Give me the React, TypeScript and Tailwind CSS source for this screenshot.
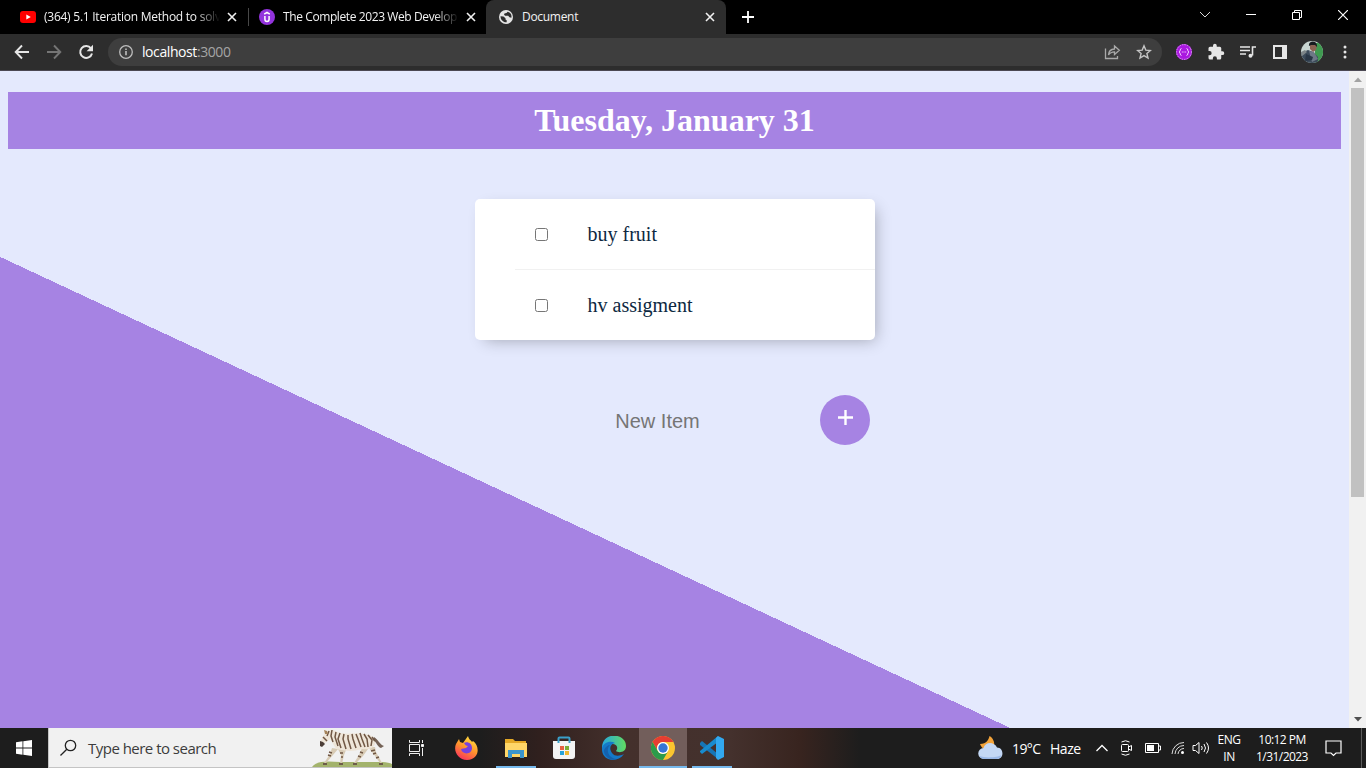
import React, { useId } from "react";

const uiFont = "font-['Open_Sans','Noto_Sans',sans-serif]";

function Cross({ className = "" }: { className?: string }) {
  return (
    <svg className={`shrink-0 ${className}`} width="10" height="10" viewBox="0 0 10 10" fill="none" stroke="#f1f1f1" strokeWidth="1.6">
      <path d="M1 1l8 8M9 1L1 9" />
    </svg>
  );
}

function TabBar() {
  return (
    <div className="flex h-[34px] w-full bg-black text-[12px] text-[#f2f2f2]">
      <div className="flex h-full w-[248px] items-center pl-5">
        <svg width="16" height="12" viewBox="0 0 16 12" className="shrink-0">
          <rect width="16" height="12" rx="3" fill="#f00" />
          <path d="M6.3 3.4v5.2L10.8 6z" fill="#fff" />
        </svg>
        <div className="ml-2 w-[176px] whitespace-nowrap tracking-[-0.25px] [mask-image:linear-gradient(90deg,#000_86%,transparent_100%)]">
          (364) 5.1 Iteration Method to solv
        </div>
        <Cross className="ml-[7px]" />
      </div>
      <div className="mt-2 h-[18px] w-px bg-[#484848]" />
      <div className="flex h-full w-[237px] items-center pl-[10px]">
        <svg width="16" height="16" viewBox="0 0 16 16" className="shrink-0">
          <circle cx="8" cy="8" r="8" fill="#9333dd" />
          <path d="M5.2 5.2L8 3.5l2.8 1.7M5.900 7v3.200c0 2.900 4.200 2.900 4.200 0V7" fill="none" stroke="#fff" strokeWidth="1.5" />
        </svg>
        <div className="ml-2 w-[176px] whitespace-nowrap tracking-[-0.4px] [mask-image:linear-gradient(90deg,#000_86%,transparent_100%)]">
          The Complete 2023 Web Develop
        </div>
        <Cross className="ml-[7px]" />
      </div>
      <div className="flex h-full w-[240px] items-center rounded-t-[8px] bg-[#2d2d2d] pl-[13px]">
        <svg width="14" height="14" viewBox="0 0 14 14" className="shrink-0">
          <circle cx="7" cy="7" r="7" fill="#e4e4e4" />
          <path d="M1.500 6.200l3 .3 2 1.700v1.300l1.200.7v2.100C4 12.300 1.500 9.700 1.500 6.200zM8.500 1.700C8 3 7 3.300 5.700 3.300L5 4.700l1.200 1h3l1.200 1.600 2 .5C13 4.600 11.200 2.300 8.500 1.700z" fill="#2d2d2d" />
        </svg>
        <div className="ml-[9px] w-[174px] tracking-[-0.3px]">Document</div>
        <Cross className="ml-[9px]" />
      </div>
      <div className="flex flex-1 items-center pl-4">
        <svg width="12" height="12" viewBox="0 0 12 12" stroke="#fff" strokeWidth="1.8"><path d="M6 0v12M0 6h12" /></svg>
      </div>
      <div className="flex h-[29px] items-center pr-[18px]">
        <svg width="12" height="8" viewBox="0 0 12 8" fill="none" stroke="#d8d8d8" strokeWidth="1"><path d="M1 1l5 5 5-5" /></svg>
        <div className="ml-[35px] h-px w-[10px] bg-white" />
        <svg className="ml-9" width="10" height="10" viewBox="0 0 10 10" fill="none" stroke="#fff"><path d="M.5 2.500h7v7h-7zM2.500 2.500v-2h7v7h-2" /></svg>
        <svg className="ml-9" width="10" height="10" viewBox="0 0 10 10" fill="none" stroke="#fff" strokeWidth="1.2"><path d="M0 0l10 10M10 0L0 10" /></svg>
      </div>
    </div>
  );
}

function Toolbar() {
  const clip = useId();
  return (
    <div className="flex h-[37px] w-full items-center border-b border-[#4b4853] bg-[#2d2d2d]">
      <svg className="ml-[14px]" width="16" height="16" viewBox="0 0 16 16" fill="none" stroke="#e6e6e6" strokeWidth="1.9"><path d="M15 8H2M8 1.500L1.700 8 8 14.500" /></svg>
      <svg className="ml-4" width="16" height="16" viewBox="0 0 16 16" fill="none" stroke="#757575" strokeWidth="1.9"><path d="M1 8h13M8 1.500L14.300 8 8 14.500" /></svg>
      <svg className="ml-4" width="16" height="16" viewBox="0 0 16 16"><path d="M13 4.300A6 6 0 1 0 14 9.500" fill="none" stroke="#e6e6e6" strokeWidth="2" /><path d="M15 .8v6.400H8.600z" fill="#e6e6e6" /></svg>
      <div className="ml-[14px] flex h-7 w-[1054px] items-center rounded-full bg-[#3e3e3e] pl-[11px]">
        <svg width="14" height="14" viewBox="0 0 14 14" fill="none" stroke="#bdbdbd" strokeWidth="1.300"><circle cx="7" cy="7" r="6.300" /><path d="M7 6v4.300M7 3.400V5" strokeWidth="1.600" /></svg>
        <div className="ml-[9px] flex-1 text-[14px] leading-5 tracking-[-0.42px] text-white">localhost<span className="text-[#a5a5a5]">:3000</span></div>
        <svg width="17" height="16" viewBox="0 0 17 16" fill="none" stroke="#a9a9a9" strokeWidth="1.300"><path d="M1.500 4.500v10h12v-2.500M4.500 11c.2-4 2.500-5.800 6-6V2l4.800 4.300L10.500 10.500V7.800C8 7.800 6 8.500 4.500 11z" /></svg>
        <svg className="ml-[15px] mr-[10px]" width="16" height="16" viewBox="0 0 16 16" fill="none" stroke="#c5c5c5" strokeWidth="1.400"><path d="M8 1.800l1.800 4.300 4.600.4-3.500 3 1.100 4.500L8 11.600 4 14l1.100-4.500-3.500-3 4.600-.4z" /></svg>
      </div>
      <svg className="ml-[14px]" width="16" height="16" viewBox="0 0 16 16" fill="none"><circle cx="8" cy="8" r="8" fill="#aa18e0" /><circle cx="8" cy="8" r="7.400" stroke="#dd9af3" strokeDasharray="1.500 1" /><path d="M5.500 4.500C3.500 4.500 5 7.500 3 8c2 .5.500 3.500 2.500 3.500M10.500 4.500c2 0 .5 3 2.500 3.500-2 .5-.5 3.500-2.500 3.500M5.800 8h1M7.500 8h1M9.200 8h1" stroke="#f4d1ff" /></svg>
      <svg className="ml-[15px]" width="18" height="18" viewBox="0 0 24 24" fill="#e6e6e6"><path d="M20.500 11H19V7a2 2 0 0 0-2-2h-4V3.500a2.500 2.500 0 0 0-5 0V5H4a2 2 0 0 0-2 2v3.800h1.500a2.700 2.700 0 0 1 0 5.400H2V20a2 2 0 0 0 2 2h3.800v-1.500a2.700 2.700 0 0 1 5.400 0V22H17a2 2 0 0 0 2-2v-4h1.500a2.500 2.500 0 0 0 0-5z" /></svg>
      <svg className="ml-[15px]" width="16" height="14" viewBox="0 0 16 14" fill="none" stroke="#e6e6e6" strokeWidth="1.600"><path d="M0 2h10M0 5.500h10M0 9h6M16 2h-3.500v8.500" /><circle cx="10.500" cy="10.800" r="2" fill="#e6e6e6" stroke="none" /></svg>
      <svg className="ml-[17px]" width="14" height="14" viewBox="0 0 14 14"><path d="M1 1h12v12H1z" fill="none" stroke="#e6e6e6" strokeWidth="2" /><path d="M9 1h4v12H9z" fill="#e6e6e6" /></svg>
      <svg className="ml-[14px]" width="22" height="22" viewBox="0 0 22 22">
        <clipPath id={clip}><circle cx="11" cy="11" r="11" /></clipPath>
        <g clipPath={`url(#${clip})`}>
          <rect width="22" height="22" fill="#c9d6d2" /><path d="M14 2h8v20h-8z" fill="#3f9a50" /><path d="M0 12l7-3 5 2 5 5v6H0z" fill="#3c4b5a" /><path d="M9 4h7l-1 5-3 2-3-3z" fill="#8b6353" /><path d="M8 5c-1-6 9-6 8 1l-2-2h-4z" fill="#171c20" /><path d="M8 10l5 1 4 7-6 3z" fill="#6d7886" /><path d="M5 13l7 3-1 3-7 1z" fill="#293645" /><path d="M0 11l4-2 2 2-6 5z" fill="#7d8588" />
        </g>
      </svg>
      <svg className="ml-[20px]" width="4" height="14" viewBox="0 0 4 14" fill="#e6e6e6"><circle cx="2" cy="2" r="1.500" /><circle cx="2" cy="7" r="1.500" /><circle cx="2" cy="12" r="1.500" /></svg>
    </div>
  );
}

function Item({ text, border }: { text: string; border?: boolean }) {
  return (
    <div className={`ml-10 flex items-center pl-5 ${border ? "h-[71px] border-b border-[#f1f1f1]" : "h-[70px]"}`}>
      <input type="checkbox" aria-label={text} className="h-[13px] w-[13px] shrink-0" />
      <p className="ml-[39.5px] pt-px font-['Liberation_Serif',serif] text-[20px] leading-[23px] text-[#0d2841]">{text}</p>
    </div>
  );
}

function TodoPage() {
  return (
    <div className="flex h-[657px] w-full">
      <main className="flex w-[1349px] flex-col items-center bg-[linear-gradient(25deg,#a683e3_427px,#e4e9fd_427px)] px-2 pt-[21px]">
        <h1 className="h-[57px] w-full bg-[#a683e3] py-[10px] text-center font-['Liberation_Serif',serif] text-[32px] font-bold leading-[37px] text-white">Tuesday, January 31</h1>
        <section className="ml-px mt-[50px] h-[141px] w-[400px] rounded-[5px] bg-white shadow-[5px_5px_15px_-5px_rgba(0,0,0,0.3)]">
          <Item text="buy fruit" border />
          <Item text="hv assigment" />
        </section>
        <form className="ml-px mt-[55px] flex h-[50px] w-[400px] items-center" onSubmit={(e) => e.preventDefault()}>
          <input type="text" placeholder="New Item" aria-label="New Item" className="ml-[34px] mt-[2px] h-[50px] w-[297px] shrink-0 bg-transparent text-center font-['Liberation_Sans',sans-serif] text-[20px] outline-none placeholder:text-[#757575]" />
          <button className="ml-[14px] flex h-[50px] w-[50px] shrink-0 items-center justify-center rounded-full bg-[#a683e3] pb-[5px]" aria-label="Add">
            <svg width="15" height="15" viewBox="0 0 15 15" stroke="#fff" strokeWidth="2.400"><path d="M7.500 0v15M0 7.500h15" /></svg>
          </button>
        </form>
      </main>
      <aside className="flex w-[17px] flex-col items-center bg-[#f1f1f1]">
        <svg width="17" height="17" viewBox="0 0 17 17"><path d="M5 11h8L9 6.500z" fill="#a3a3a3" /></svg>
        <div className="h-[409px] w-[13px] bg-[#c1c1c1]" />
        <svg className="mt-auto" width="17" height="17" viewBox="0 0 17 17"><path d="M5 6h8l-4 4.500z" fill="#505050" /></svg>
      </aside>
    </div>
  );
}

function Zebra() {
  return (
    <svg width="80" height="38" viewBox="0 0 80 38" className="shrink-0">
      <path d="M0 38c4-6 14-6 28-5h42c5 0 8 1 10 2v3z" fill="#a3b36c" />
      <g fill="#d8cbb5">
        <path d="M20 19l-2 6-6 9h2l7-8 5-6M26 20l3 6-1 9h2l2-9 2-5M50 19l-3 7-5 8h2l7-7 5-7M56 18l5 6 7 10h2l-6-11-1-5" />
        <path d="M8 13l4-7 3-4 6-1 7 3c9 2 17-1 25 1 8 1 11 5 10 10-2 5-8 6-13 5-9 3-18 2-25 0-4-3-4-7-7-10l-5 4-3 3z" fill="#eee5d8" />
      </g>
      <path d="M62 8c5 3 5 7 10 9l-3 2c-4-1-4-6-8-8z" fill="#746256" />
      <g stroke="#705744" strokeWidth="1.500" fill="none">
        <path d="M17 2l-2 5M20 1l-1 6 2 6M24 3l-1 5 3 9M28 4l-2 6 3 9M32 5l-1 5 3 10M36 6l0 4 3 10M40 5l1 5 3 9M44 5l2 5 3 8M48 4l2 6 3 8M52 5l3 5 1 8M56 6l4 5-1 6M60 8l3 4M11 8l4 4M17 23l3 1M16 26l3 1M28 24h3M29 28h2M48 23l3 1M46 27l3 1M59 22l4-1M61 25l3-1M64 29l3-1" />
      </g>
      <path d="M8 12l3 1 2 2-3 3-2-1z" fill="#4b3d37" /><path d="M13 5l-1-4 3 1 1 3z" fill="#a6845b" /><path d="M11 34h4v2h-4zM27 34h4v2h-4zM41 34h4v2h-4zM67 34h4v2h-4z" fill="#6c5c49" />
    </svg>
  );
}

function Weather() {
  return (
    <svg width="26" height="24" viewBox="0 0 26 24">
      <path d="M11.500 0c-1 4-3 8-9.500 8 1 3 3 5 6 5l8-2c1-5-1-9-4.500-11z" fill="#f2a33a" />
      <path d="M6 23a5.500 5.500 0 0 1-.5-11c2-7 11-6 13.500-.5 7 0 7.500 11.500 0 11.500z" fill="#c4d8f5" /><path d="M1.500 20c4 2 18 2 22-1-1 3-3 4-5 4H6c-2 0-3.500-1-4.500-3z" fill="#9bb9e8" />
    </svg>
  );
}

function Taskbar() {
  const g = useId();
  return (
    <footer className="flex h-10 w-full items-center bg-[linear-gradient(90deg,#1d1d1d_0,#1d1d1d_480px,#30201e_540px,#44302c_620px,#44312d_730px,#38241f_800px,#1d1d1d_860px,#1d1d1d_100%)]">
      <div className="flex h-full w-12 shrink-0 items-center justify-center">
        <svg width="16" height="16" viewBox="0 0 16 16" fill="#fff"><path d="M0 2.200l6.500-.9v6.300H0zM7.300 1.200L16 0v7.600H7.300zM0 8.400h6.500v6.300L0 13.800zM7.300 8.400H16V16l-8.700-1.200z" /></svg>
      </div>
      <div className="flex h-10 w-[344px] shrink-0 items-center border-b border-l border-[#c4c4c4] bg-[#f1f1f1] pl-[11px]">
        <svg width="17" height="17" viewBox="0 0 17 17" fill="none" stroke="#222" strokeWidth="1.300"><circle cx="10.500" cy="6.500" r="5.200" /><path d="M6.800 10.200L.5 16.500" /></svg>
        <span className="ml-[11px] flex-1 pt-px text-[15px] tracking-[-0.52px] text-[#3c3c3c]">Type here to search</span>
        <Zebra />
      </div>
      <div className="flex h-full w-12 items-center justify-center">
        <svg width="17" height="16" viewBox="0 0 17 16" fill="none" stroke="#eee"><path d="M1.500 0v2.500h10V0M1.500 16v-2.500h10V16M1.500 4.500h10v7h-10zM14.500 0v3M14.500 8v8" /><path d="M13.500 4.500h2v2h-2z" fill="#fff" /></svg>
      </div>
      <div className="flex h-full w-[54px] items-center justify-center">
        <svg width="24" height="24" viewBox="0 0 24 24">
          <defs><linearGradient id={`${g}f`} x1=".8" x2=".3" y2="1"><stop stopColor="#ffe642" /><stop offset=".5" stopColor="#ff972c" /><stop offset="1" stopColor="#fa315c" /></linearGradient></defs>
          <path d="M1 8l3-5 1 3 3 1 5-7c1 4 3 4 4 6l1-1c7 5 7 18-6 19C3 24-2 15 1 8z" fill={`url(#${g}f)`} />
          <path d="M9 7c3-2 8 0 8 5 0 7-10 7-11 1l5-1 2-2c-2 0-3-1-4-3z" fill="#7641df" />
        </svg>
      </div>
      <div className="flex h-full w-[43px] flex-col items-center justify-end">
        <svg className="mb-[8px]" width="22" height="19" viewBox="0 0 22 19"><path d="M0 0h8l2 2h11v4H0z" fill="#e5a825" /><path d="M0 4h22v14H0z" fill="#ffd668" /><path d="M3 19v-8h16v8h-4v-4H7v4z" fill="#3b95cc" /></svg>
        <div className="h-[2px] w-10 bg-[#76b9ed]" />
      </div>
      <div className="flex h-full w-[54px] items-center justify-center">
        <svg width="24" height="24" viewBox="0 0 24 24"><path d="M6.500 6V2.500q0-1 1-1h9q1 0 1 1V6" fill="none" stroke="#3aa0cb" strokeWidth="2" /><path d="M1 5h22v15q0 3-3 3H4q-3 0-3-3z" fill="#f3f3f3" /><path d="M6.500 5v2M17.500 5v2" stroke="#3aa0cb" strokeWidth="2" /><path d="M8 10h4v4H8z" fill="#e66042" /><path d="M13 10h4v4h-4z" fill="#7cad37" /><path d="M8 15h4v4H8z" fill="#27a2d8" /><path d="M13 15h4v4h-4z" fill="#efb72f" /></svg>
      </div>
      <div className="flex h-full w-12 items-center justify-center pr-[3px]">
        <svg width="24" height="24" viewBox="0 0 24 24">
          <defs><linearGradient id={`${g}e`}><stop stopColor="#25a7df" /><stop offset="1" stopColor="#61db61" /></linearGradient></defs>
          <path d="M0 11C1-5 24-3 24 10c0 7-8 7-10 5 3-4 0-7-4-7-5 0-8 3-10 7z" fill={`url(#${g}e)`} />
          <path d="M0 12c1-5 8-8 13-5-5 1-6 6-3 10 3 4 8 3 12 1C15 28-1 25 0 12z" fill="#1479c8" /><path d="M8 9c-5 5-1 14 7 14-7 3-14-4-13-9 1-3 4-5 6-5z" fill="#1461ad" />
        </svg>
      </div>
      <div className="flex h-full w-12 flex-col items-center justify-end bg-[#725e5b]">
        <svg className="mb-[6px]" width="24" height="24" viewBox="0 0 24 24"><circle cx="12" cy="12" r="12" fill="#fbc52f" /><path d="M1.600 6A12 12 0 0 1 22.400 6H12a6 6 0 0 0-5.200 9z" fill="#e63d32" /><path d="M1.600 6A12 12 0 0 0 12 24l5.200-9a6 6 0 0 1-10.400 0z" fill="#2b9b4b" /><circle cx="12" cy="12" r="6" fill="#fff" /><circle cx="12" cy="12" r="4.700" fill="#3675d5" /></svg>
        <div className="h-[2px] w-full bg-[#76b9ed]" />
      </div>
      <div className="ml-[5px] flex h-full w-10 flex-col items-center justify-end">
        <svg className="mb-[6px]" width="24" height="24" viewBox="0 0 24 24"><path d="M0 7l2-2 16 13v5L0 9z" fill="#1675b6" /><path d="M0 16l2 2L18 6V0L0 15z" fill="#188bce" /><path d="M18 0l6 3v18l-6 3-2-2V2z" fill="#32a8ef" /></svg>
        <div className="h-[2px] w-full bg-[#76b9ed]" />
      </div>
      <div className="ml-auto flex h-full items-center text-white">
        <Weather />
        <span className="ml-2 w-[38px] whitespace-nowrap pt-px text-[14px] tracking-[-0.6px]">19°C</span>
        <span className="w-[46px] pt-px text-[14px] tracking-[-0.45px]">Haze</span>
        <svg width="12" height="8" viewBox="0 0 12 8" fill="none" stroke="#fff" strokeWidth="1.300"><path d="M.5 7L6 1.500 11.500 7" /></svg>
        <svg className="ml-[13px]" width="12" height="16" viewBox="0 0 12 16" fill="none" stroke="#fff"><rect x=".5" y="4.500" width="7" height="7" rx="1" /><path d="M7.500 7l3-1.500v5l-3-1.500M.5 2Q4.500-.5 8.500 2M.5 14q4 2.500 8 0" /></svg>
        <svg className="ml-[12px]" width="16" height="10" viewBox="0 0 16 10" fill="none" stroke="#fff"><path d="M.5.5h13v9H.5zM14 3h1.500v4H14" /><path d="M2 2h7v6H2z" fill="#fff" stroke="none" /></svg>
        <svg className="ml-[10px]" width="14" height="14" viewBox="0 0 14 14" fill="none" stroke="#ddd"><path d="M1 13A12 12 0 0 1 13 1.500M4 13a9 9 0 0 1 9-8.500M7 13a6 6 0 0 1 6-5.500" /><circle cx="11.500" cy="11.500" r="1.500" fill="#fff" stroke="none" /></svg>
        <svg className="ml-[7px]" width="18" height="14" viewBox="0 0 18 14" fill="none" stroke="#fff"><path d="M1 4.500h2.500L7 1.500v11l-3.500-3H1zM9.500 5q1.500 2 0 4M12 3q3 4 0 8M14.500 1.500q4 5.500 0 11" /></svg>
        <div className="ml-[3px] w-[32px] text-center text-[12px] leading-[17px] tracking-[-0.5px]">ENG<br />IN</div>
        <div className="ml-[3px] w-[68px] whitespace-nowrap text-center text-[12px] leading-[17px] tracking-[-0.55px]">10:12 PM<br />1/31/2023</div>
        <svg className="ml-[9px] mr-[19px]" width="17" height="17" viewBox="0 0 17 17" fill="none" stroke="#fff" strokeWidth="1.200"><path d="M1 1h15v12h-5l-2.500 2.500L6 13H1z" /></svg>
        <div className="mr-[4px] h-full w-px bg-[#5b5b5b]" />
      </div>
    </footer>
  );
}

export default function App() {
  return (
    <div className={`flex h-[768px] w-[1366px] flex-col overflow-hidden ${uiFont}`}>
      <TabBar />
      <Toolbar />
      <TodoPage />
      <Taskbar />
    </div>
  );
}
